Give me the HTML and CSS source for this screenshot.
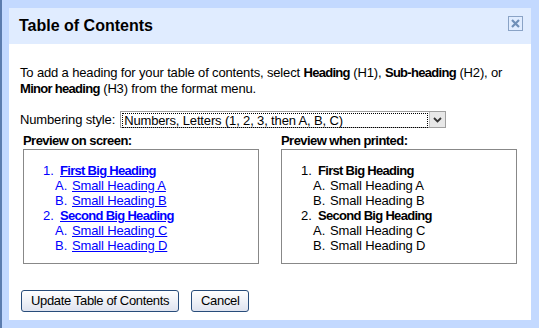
FILE: index.html
```html
<!DOCTYPE html>
<html lang="en">
<head>
	<meta charset="UTF-8">
	<title>Table of Contents</title>
	<link rel="stylesheet" href="styles.css">
</head>
<body>
	<div class="dialog">
		<div class="dialog-header">
			<div class="dialog-title">Table of Contents</div>
			<div class="close">
				<svg width="11" height="11" viewBox="0 0 11 11">
					<path d="M2 2 L9 9 M9 2 L2 9" stroke="#6f8fb8" stroke-width="2.2"/>
				</svg>
			</div>
		</div>
		<div class="dialog-body">
			<p class="intro">To add a heading for your table of contents, select <b>Heading</b> (H1), <b>Sub-heading</b> (H2), or <b>Minor heading</b> (H3) from the format menu.</p>
			<div class="numbering">
				<span>Numbering style:</span>
				<div class="select">
					<div class="select-value"><span>Numbers, Letters (1, 2, 3, then A, B, C)</span></div>
					<div class="select-arrow">
						<svg width="9" height="6" viewBox="0 0 9 6">
							<path d="M1 1 L4.5 4.5 L8 1" stroke="#333" stroke-width="1.8" fill="none"/>
						</svg>
					</div>
				</div>
			</div>
			<div class="previews">
				<div class="preview">
					<div class="preview-title">Preview on screen:</div>
					<div class="preview-box screen">
						<div class="big"><span class="num">1.</span><a href="#">First Big Heading</a></div>
						<div class="small"><span class="num">A.</span><a href="#">Small Heading A</a></div>
						<div class="small"><span class="num">B.</span><a href="#">Small Heading B</a></div>
						<div class="big"><span class="num">2.</span><a href="#">Second Big Heading</a></div>
						<div class="small"><span class="num">A.</span><a href="#">Small Heading C</a></div>
						<div class="small"><span class="num">B.</span><a href="#">Small Heading D</a></div>
					</div>
				</div>
				<div class="preview">
					<div class="preview-title">Preview when printed:</div>
					<div class="preview-box">
						<div class="big"><span class="num">1.</span><span>First Big Heading</span></div>
						<div class="small"><span class="num">A.</span><span>Small Heading A</span></div>
						<div class="small"><span class="num">B.</span><span>Small Heading B</span></div>
						<div class="big"><span class="num">2.</span><span>Second Big Heading</span></div>
						<div class="small"><span class="num">A.</span><span>Small Heading C</span></div>
						<div class="small"><span class="num">B.</span><span>Small Heading D</span></div>
					</div>
				</div>
			</div>
			<div class="buttons">
				<div class="button">Update Table of Contents</div>
				<div class="button">Cancel</div>
			</div>
		</div>
	</div>
</body>
</html>
```

FILE: styles.css
```css
body {
	margin: 0;
	height: 328px;
	box-sizing: border-box;
	padding: 8px 8px 8px 7px;
	background-color: #c3d9ff;
	border-left: 2px solid #5b7cae;
	font-family: "Liberation Sans", Arial, sans-serif;
	font-size: 13px;
	letter-spacing: -0.15px;
	color: #000;
	overflow: hidden;
}

b {
	letter-spacing: -0.7px;
}

.dialog {
	width: 522px;
	height: 312px;
	background-color: #fff;
}

.dialog-header {
	height: 36px;
	background-color: #e0ecff;
	display: flex;
	justify-content: space-between;
	align-items: flex-start;
	padding: 0 8px 0 10px;
}

.dialog-title {
	font-size: 16px;
	font-weight: bold;
	letter-spacing: 0;
	margin-top: 9px;
}

.close {
	width: 13px;
	height: 13px;
	border: 1px solid #8aa3c6;
	display: flex;
	justify-content: center;
	align-items: center;
	margin-top: 8px;
}

.dialog-body {
	padding: 0 11px;
}

.intro {
	margin: 21px 0 0;
	line-height: 16px;
}

.numbering {
	display: flex;
	align-items: center;
	margin-top: 14px;
}

.select {
	display: flex;
	width: 326px;
	height: 17px;
	border: 1px solid #a0a0a0;
	margin-left: 5px;
	box-sizing: border-box;
}

.select-value {
	flex: 1;
	padding: 1px;
}

.select-value span {
	display: block;
	height: 13px;
	line-height: 13px;
	border: 1px dotted #000;
	padding-left: 1px;
}

.select-arrow {
	width: 15px;
	background-color: #e8e8e8;
	border-left: 1px solid #c0c0c0;
	display: flex;
	justify-content: center;
	align-items: center;
}

.previews {
	display: flex;
	justify-content: space-between;
	margin-top: 5px;
	padding: 0 3px;
}

.preview {
	width: 236px;
}

.preview-title {
	font-weight: bold;
	letter-spacing: -0.55px;
	line-height: 16px;
}

.preview-box {
	height: 100px;
	border: 1px solid #888;
	padding: 13px 0 0 19px;
	line-height: 15px;
}

.preview-box .big {
	font-weight: bold;
	letter-spacing: -0.7px;
}

.preview-box .small {
	padding-left: 12px;
}

.num {
	display: inline-block;
	width: 17px;
	font-weight: normal;
	letter-spacing: 0;
}

.screen {
	color: #00f;
}

.screen a {
	color: #00f;
}

.buttons {
	display: flex;
	gap: 12px;
	margin-top: 26px;
	padding-left: 1px;
}

.button {
	height: 20px;
	line-height: 20px;
	padding: 0 9px;
	border: 1px solid #284c7a;
	border-radius: 3px;
	background: linear-gradient(#ffffff, #dfe3ef);
	font-size: 13px;
	letter-spacing: -0.35px;
}
```
